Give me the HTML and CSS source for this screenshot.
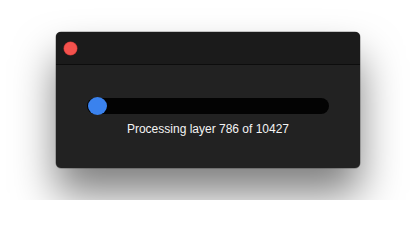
FILE: index.html
```html
<!DOCTYPE html>
<html lang="en">
<head>
    <title>Processing</title>
    <meta charset="UTF-8">
    <link rel="stylesheet" href="styles.css">
</head>
<body>
    <div class="window">
        <div class="titlebar">
            <span class="close"></span>
        </div>
        <div class="content">
            <div class="track">
                <div class="knob"></div>
            </div>
            <div class="status">Processing layer 786 of 10427</div>
        </div>
    </div>
</body>
</html>
```

FILE: styles.css
```css
body { margin: 0; padding: 32px 56px; background: #fff; font-family: "Liberation Sans", Arial, sans-serif; }
.window { width: 304px; height: 136px; background: #222; border-radius: 5px; overflow: hidden; box-shadow: 0 26px 42px rgba(0,0,0,0.5), 0 0 0 0.5px rgba(0,0,0,0.4); }
.titlebar { height: 33px; background: #1b1b1b; border-bottom: 1px solid #0d0d0d; box-sizing: border-box; display: flex; align-items: center; padding-left: 8px; }
.close { width: 13px; height: 13px; border-radius: 50%; background: #f4524d; box-shadow: 0 0 0 0.5px #b33; }
.content { padding: 33px 31px 0 31px; }
.track { height: 16px; background: #030303; border-radius: 8px; position: relative; }
.knob { position: absolute; left: 1px; top: -1px; width: 19px; height: 18px; border-radius: 50%; background: #3a82ee; }
.status { color: #f4f4f4; font-size: 12px; text-align: center; margin-top: 8px; }
```
